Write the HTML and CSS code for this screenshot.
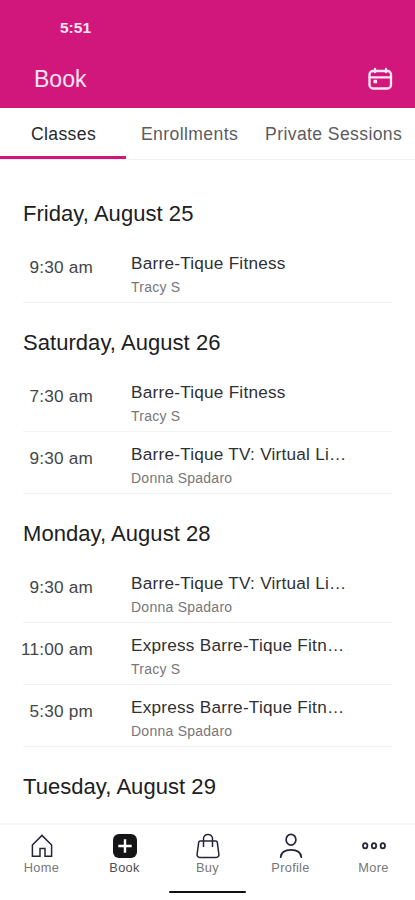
FILE: index.html
```html
<!DOCTYPE html>
<html lang="en">

<head>
  <meta charset="UTF-8" />
  <meta name="viewport" content="width=device-width, initial-scale=1.0" />
  <title>Book</title>
  <link rel="stylesheet" href="styles.css">
</head>

<body>
  <header class="app-header">
    <div class="status-time">5:51</div>
    <div class="title-bar">
      <h1>Book</h1>
      <svg class="calendar" viewBox="0 0 26 24" width="26" height="24" fill="none" stroke="currentColor" stroke-width="2.3" stroke-linecap="round">
        <rect x="2.5" y="4" width="21.5" height="17.5" rx="3.5" />
        <path d="M2.5 10.4h21.5M8 1.8v3.4M19 1.8v3.4" />
        <rect x="6.5" y="12.8" width="3.6" height="3.4" fill="currentColor" stroke="none" />
      </svg>
    </div>
  </header>

  <nav class="tabs">
    <a class="tab active">Classes</a>
    <a class="tab">Enrollments</a>
    <a class="tab">Private Sessions</a>
  </nav>

  <main class="schedule">
    <section>
      <h2>Friday, August 25</h2>
      <div class="row">
        <div class="time">9:30 am</div>
        <div class="info">
          <div class="name">Barre-Tique Fitness</div>
          <div class="staff">Tracy S</div>
        </div>
      </div>
    </section>

    <section>
      <h2>Saturday, August 26</h2>
      <div class="row">
        <div class="time">7:30 am</div>
        <div class="info">
          <div class="name">Barre-Tique Fitness</div>
          <div class="staff">Tracy S</div>
        </div>
      </div>
      <div class="row">
        <div class="time">9:30 am</div>
        <div class="info">
          <div class="name">Barre-Tique TV: Virtual Li…</div>
          <div class="staff">Donna Spadaro</div>
        </div>
      </div>
    </section>

    <section>
      <h2>Monday, August 28</h2>
      <div class="row">
        <div class="time">9:30 am</div>
        <div class="info">
          <div class="name">Barre-Tique TV: Virtual Li…</div>
          <div class="staff">Donna Spadaro</div>
        </div>
      </div>
      <div class="row">
        <div class="time">11:00 am</div>
        <div class="info">
          <div class="name">Express Barre-Tique Fitn…</div>
          <div class="staff">Tracy S</div>
        </div>
      </div>
      <div class="row">
        <div class="time">5:30 pm</div>
        <div class="info">
          <div class="name">Express Barre-Tique Fitn…</div>
          <div class="staff">Donna Spadaro</div>
        </div>
      </div>
    </section>

    <section>
      <h2>Tuesday, August 29</h2>
    </section>
  </main>

  <footer class="bottom-bar">
    <nav class="bottom-nav">
      <a class="nav-item">
        <svg viewBox="0 0 26 26" width="26" height="26" fill="none" stroke="currentColor" stroke-width="1.5">
          <path d="M3.4 12L13 2.4l9.6 9.6v11.3h-6.6v-7.8h-5v7.8H3.4z" />
        </svg>
        <span>Home</span>
      </a>
      <a class="nav-item active">
        <svg viewBox="0 0 26 26" width="26" height="26">
          <rect x="1" y="1" width="24" height="24" rx="6" fill="#151518" />
          <path d="M13 6.3v13.4M6.3 13h13.4" stroke="#fff" stroke-width="2.4" />
        </svg>
        <span>Book</span>
      </a>
      <a class="nav-item">
        <svg viewBox="0 0 26 26" width="26" height="26" fill="none" stroke="currentColor" stroke-width="1.5" stroke-linecap="round" stroke-linejoin="round">
          <path d="M5.2 8h15.600a1.500 1.500 0 0 1 1.500 1.300l1.600 12.200a2.600 2.600 0 0 1-2.600 2.900H4.700a2.600 2.600 0 0 1-2.600-2.900L3.700 9.300A1.500 1.500 0 0 1 5.200 8z" />
          <path d="M8.500 13.400V5.700a4.500 4.300 0 0 1 9 0v7.700" />
        </svg>
        <span>Buy</span>
      </a>
      <a class="nav-item">
        <svg viewBox="0 0 26 26" width="26" height="26" fill="none" stroke="currentColor" stroke-width="1.7" stroke-linecap="round">
          <ellipse cx="13" cy="6.7" rx="4.9" ry="5.4" />
          <path d="M2.7 24.2c.4-4.8 4.3-7.3 10.300-7.300s9.900 2.500 10.300 7.300" />
        </svg>
        <span>Profile</span>
      </a>
      <a class="nav-item">
        <svg viewBox="0 0 26 26" width="26" height="26" fill="none" stroke="currentColor" stroke-width="1.8">
          <ellipse cx="4.2" cy="12.7" rx="2.2" ry="2.6" />
          <ellipse cx="13" cy="12.7" rx="2.2" ry="2.6" />
          <ellipse cx="21.8" cy="12.7" rx="2.2" ry="2.6" />
        </svg>
        <span>More</span>
      </a>
    </nav>
    <div class="home-indicator"></div>
  </footer>
</body>

</html>
```
FILE: styles.css
```css
* {
  box-sizing: border-box;
}

body {
  margin: 0;
  height: 900px;
  display: flex;
  flex-direction: column;
  overflow: hidden;
  background-color: #fff;
  color: #202022;
  font-family: "Liberation Sans", Arial, sans-serif;
}

h1,
h2 {
  margin: 0;
  font-weight: normal;
}

.app-header {
  height: 108px;
  flex-shrink: 0;
  background-color: #d1177c;
  color: #ffe6f3;
}

.status-time {
  padding: 19px 0 0 60px;
  height: 56px;
  font-size: 15.5px;
  font-weight: bold;
  line-height: 18px;
}

.title-bar {
  display: flex;
  justify-content: space-between;
  align-items: center;
  height: 46px;
  padding: 0 22px 0 34px;
}

.title-bar h1 {
  font-size: 23px;
}

.calendar {
  display: block;
}

.tabs {
  display: flex;
  height: 52px;
  flex-shrink: 0;
  border-bottom: 1px solid #f0f0f0;
}

.tab {
  height: 51px;
  padding: 0 12px 0 15px;
  font-size: 17.6px;
  line-height: 52px;
  letter-spacing: 0.38px;
  white-space: nowrap;
  color: #5c5c60;
}

.tab.active {
  width: 126px;
  padding: 0 0 0 1px;
  text-align: center;
  color: #29292c;
  border-bottom: 3px solid #d1177c;
}

.schedule {
  flex: 1;
  min-height: 0;
  overflow: hidden;
  padding: 14px 23px 0;
}

.schedule h2 {
  height: 67px;
  padding-top: 27px;
  font-size: 22px;
  line-height: 26px;
  letter-spacing: 0.05px;
}

.row {
  display: flex;
  height: 62px;
  border-bottom: 1px solid #f3f3f3;
}

.time {
  width: 74px;
  margin-left: -4px;
  padding-top: 16px;
  font-size: 17.2px;
  line-height: 20px;
  letter-spacing: 0.2px;
  text-align: right;
  white-space: nowrap;
  color: #454548;
}

.info {
  padding: 12px 0 0 38px;
}

.name {
  font-size: 17.2px;
  line-height: 20px;
  letter-spacing: 0.23px;
  white-space: nowrap;
  color: #303033;
}

.staff {
  margin-top: 5px;
  font-size: 14px;
  line-height: 18px;
  letter-spacing: 0.25px;
  color: #77777a;
}

.bottom-bar {
  height: 77px;
  flex-shrink: 0;
  border-top: 2px solid #f5f5f5;
}

.bottom-nav {
  display: grid;
  grid-template-columns: repeat(5, 1fr);
  height: 66px;
}

.nav-item {
  display: flex;
  flex-direction: column;
  align-items: center;
  padding-top: 8px;
  font-size: 12.8px;
  line-height: 16px;
  letter-spacing: 0.3px;
  color: #77777a;
}

.nav-item svg {
  display: block;
  margin-bottom: 1px;
  color: #25253a;
}

.nav-item.active {
  color: #505054;
}

.home-indicator {
  width: 77px;
  height: 2px;
  margin: 0 auto;
  border-radius: 1px;
  background-color: #111;
}
```
